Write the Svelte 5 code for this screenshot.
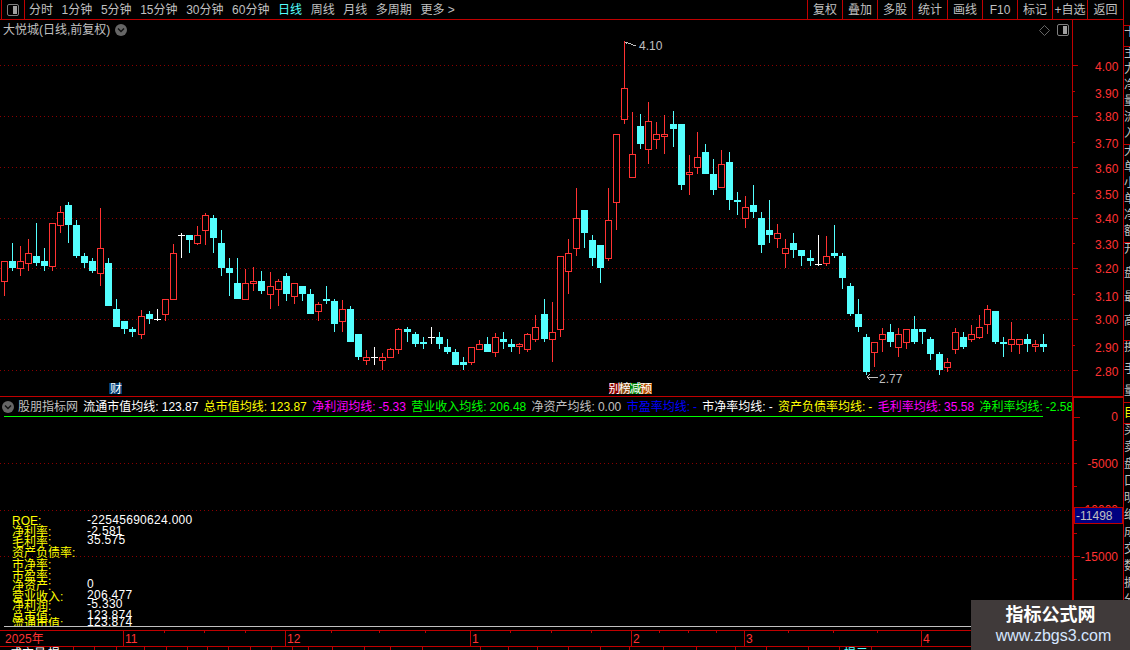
<script>
  const tools = ['分时', '1分钟', '5分钟', '15分钟', '30分钟', '60分钟', '日线', '周线', '月线', '多周期'];
  const actions = ['复权', '叠加', '多股', '统计', '画线', 'F10', '标记', '+自选', '返回'];

  const segments = [
    { ox: 0, oy: 190, rows: [
      ['r',13,214,214,275,318],['c',37,159,213,234,243],['r',61,168,214,236,258],['r',85,147,190,221,243],
      ['c',109,99,198,219,228],['c',133,174,213,228,243],['r',157,99,99,231,243],['r',181,48,67,107,129],
      ['c',205,37,45,105,159],['c',229,90,105,198,204],['c',253,189,198,219,234],['c',277,204,213,243,249],
      ['r',301,54,175,251,288],['c',325,204,219,348,348],['c',349,327,357,411,411],['c',373,393,393,417,432],
      ['c',397,411,417,426,441],['r',424,360,379,434,447],['c',448,363,372,387,402],['w',472,357,388,388,393],
      ['r',496,328,328,374,393],['r',520,162,190,329,329],['w',544,129,134,134,204],['c',568,135,135,150,189],
      ['r',592,108,136,161,165],['r',616,69,76,122,165],['c',640,75,84,144,189],['c',664,120,159,234,258],
      ['c',688,204,234,249,318],['c',712,204,279,327,327],['r',736,237,280,329,329],['r',760,231,274,281,303],
      ['c',784,243,273,303,312],['r',811,246,289,314,357],['r',835,267,274,299,348]
    ]},
    { ox: 280, oy: 190, rows: [
      ['c',19,249,258,312,333],['r',43,280,280,320,342],['c',67,288,288,312,333],['c',91,297,312,372,372],
      ['r',115,336,343,365,393],['c',139,288,327,333,342],['c',163,327,333,402,426],['r',187,330,358,395,426],
      ['c',211,348,357,456,456],['c',235,432,432,501,510],['r',259,480,502,512,525],['w',283,471,502,502,525],
      ['r',307,489,502,512,540],['r',331,474,478,503,503],['r',355,414,418,479,492],['c',382,411,417,426,456],
      ['c',406,426,432,462,471],['c',430,441,456,462,477],['w',454,411,441,441,462],['c',478,426,441,462,477],
      ['c',502,447,471,486,492],['c',526,477,486,525,525],['c',550,501,516,525,540],['r',574,472,472,518,525],
      ['r',598,450,462,479,479],['c',622,441,462,486,486],['r',646,429,442,488,501],['c',670,426,447,456,477],
      ['c',694,447,462,471,486],['r',718,459,463,472,492],['r',742,429,433,479,486],['r',766,375,412,449,456]
    ]},
    { ox: 540, oy: 90, rows: [
      ['c',13,627,672,747,756],['r',37,636,727,749,816],['r',61,499,499,719,741],['r',85,447,490,545,612],
      ['r',109,294,385,476,498],['c',133,360,360,429,474],['c',157,435,450,504,528],['c',181,465,465,534,579],
      ['r',205,294,391,506,513],['r',229,133,133,338,420],['r',253,-147,-6,89,102],['r',277,66,193,263,263],
      ['c',301,72,108,162,177],['r',325,36,94,179,222],['r',349,96,133,149,177],['r',373,75,133,140,192],
      ['c',400,63,102,117,171],['c',424,102,102,285,300],['r',448,195,247,254,315],['r',472,126,202,233,252],
      ['c',496,162,186,252,252],['c',520,207,252,300,315],['r',544,180,223,293,293],['c',568,186,216,330,360],
      ['c',592,306,330,336,375],['r',616,318,352,386,414],['c',640,285,345,366,384],['c',664,366,384,465,489],
      ['c',688,330,420,435,459],['r',712,402,430,446,474],['r',736,447,475,491,534],['c',760,429,459,480,504],
      ['c',784,480,480,498,528],['c',811,480,504,513,528],['w',835,435,521,521,528]
    ]},
    { ox: 800, oy: 190, rows: [
      ['r',79,138,199,221,228],['c',103,105,189,198,204],['c',127,189,198,264,297],['c',151,279,288,372,378],
      ['c',175,327,372,411,426],['c',199,432,441,546,555],['r',223,457,457,488,531],['r',247,414,433,449,486],
      ['c',271,402,426,456,471],['r',295,414,433,473,501],['r',319,418,418,458,477],['c',343,378,417,456,462],
      ['c',367,417,417,426,462],['c',391,441,447,492,510],['c',418,486,492,540,555],['r',442,504,517,533,546],
      ['r',466,414,427,479,492],['c',490,426,441,471,477],['r',514,405,433,449,456],['r',538,375,412,443,447],
      ['r',562,345,358,404,432],['c',586,363,363,456,462],['c',610,441,456,462,501],['r',634,396,448,464,486],
      ['r',658,448,448,464,492],['c',682,432,447,462,486],['r',706,450,463,472,486],['c',730,432,462,471,486]
    ]}
  ];

  const candles = segments.flatMap(({ ox, oy, rows }) =>
    rows.map(([kind, zx, high, top, bottom, low]) => ({
      kind,
      x: Math.floor(ox + zx / 3),
      high: Math.round(oy + high / 3),
      top: Math.round(oy + top / 3),
      bottom: Math.round(oy + bottom / 3),
      low: Math.round(oy + low / 3)
    }))
  );

  const grid = [65, 116, 167, 218, 268, 319, 370];
  const prices = [
    ['4.00', 65, 1, 66], ['3.90', 91, 0, 93], ['3.80', 116, 1, 116], ['3.70', 142, 0, 143], ['3.60', 167, 1, 168], ['3.50', 193, 0, 194],
    ['3.40', 218, 1, 218], ['3.30', 243, 0, 244], ['3.20', 268, 1, 268], ['3.10', 294, 0, 296], ['3.00', 319, 1, 319], ['2.90', 345, 0, 347], ['2.80', 370, 1, 371]
  ];

  const legend = [
    ['流通市值均线:', '123.87', 'white'], ['总市值均线:', '123.87', 'yellow'], ['净利润均线:', '-5.33', 'magenta'],
    ['营业收入均线:', '206.48', 'green'], ['净资产均线:', '0.00', 'grey'], ['市盈率均线:', '-', 'blue'],
    ['市净率均线:', '-', 'white'], ['资产负债率均线:', '-', 'yellow'], ['毛利率均线:', '35.58', 'magenta'], ['净利率均线:', '-2.58', 'green']
  ];

  const stats = [
    ['ROE:', 520, '-22545690624.000', 520], ['净利率:', 531, '-2.581', 531], ['毛利率:', 541, '35.575', 540],
    ['资产负债率:', 552, '', 0], ['市净率:', 564, '', 0], ['市盈率:', 575, '', 0], ['净资产:', 585, '0', 584],
    ['营业收入:', 596, '206.477', 595], ['净利润:', 605, '-5.330', 604], ['总市值:', 616, '123.874', 615], ['流通市值:', 623, '123.874', 622]
  ];

  const lowerGrid = [463, 510, 556];
  const lowerTicks = [440, 463, 486, 510, 533, 556, 579, 602];
  const months = [['11', 123], ['12', 285], ['1', 470], ['2', 631], ['3', 744], ['4', 921]];
  const topTicks = [164, 204, 245, 331, 379, 425, 510, 551, 591, 659, 688, 716, 788, 833, 877];
  const bottomTicks = [43, 73, 94, 116, 144, 166, 187, 207, 228, 250, 271, 292, 308, 332, 364, 390, 422, 480, 508, 537, 568, 600, 629, 663, 696, 735, 766, 808, 839, 871];
  const stamps = [['别', 'dark'], ['榜', 'brown'], ['减', 'leaf'], ['预', 'orange']];
  const stripCells = [
    ['十', 'c-head'], ['主力净量流入', 'c-a'], ['大单小单净额', 'c-a'], ['开盘最高', 'c-b'], ['换手量', 'c-c'],
    ['目', 'c-mark'], ['买卖盘口明细成交数据分析', 'c-d']
  ];
</script>

<div class="screen">
  <header class="toolbar">
    <div class="toggle-cell">
      <span class="toggle"><i></i></span>
    </div>
    <nav class="tools">
      {#each tools as tool}
        <span class:active={tool === '日线'}>{tool}</span>
      {/each}
      <span>更多 &gt;</span>
    </nav>
    <div class="actions">
      {#each actions as action}
        <span>{action}</span>
      {/each}
    </div>
  </header>

  <div class="workspace">
    <main class="charts">
      <section class="price-panel">
        <div class="plot">
          <div class="title-row">
            <span class="title">大悦城(日线,前复权)</span>
            <svg class="chev" width="12" height="12" viewBox="0 0 12 12">
              <circle cx="6" cy="6" r="6" fill="#666" />
              <path d="M3 4.6 6 7.6 9 4.6" fill="none" stroke="#111" stroke-width="1.4" />
            </svg>
            <span class="spacer"></span>
            <svg width="11" height="11" viewBox="0 0 11 11">
              <path d="M5.5.5 10.5 5.5 5.5 10.5.5 5.5Z" fill="none" stroke="#666" />
            </svg>
            <span class="toggle small"><i></i></span>
          </div>
          <svg class="kline" width="1072" height="356" viewBox="0 40 1072 356" shape-rendering="crispEdges">
            {#each grid as y}
              <line class="dot" x1="0" x2="1072" y1={y + 0.5} y2={y + 0.5} />
            {/each}
            {#each candles as c}
              {#if c.kind === 'c'}
                <rect class="cyan" x={c.x} y={c.high} width="1" height={c.low - c.high} />
                <rect class="cyan" x={c.x - 3} y={c.top} width="7" height={Math.max(c.bottom - c.top, 2)} />
              {:else if c.kind === 'r'}
                <rect class="red" x={c.x} y={c.high} width="1" height={c.top - c.high} />
                <rect class="red" x={c.x} y={c.bottom} width="1" height={c.low - c.bottom} />
                <rect class="hollow" x={c.x - 2.5} y={c.top + 0.5} width="6" height={Math.max(c.bottom - c.top - 1, 1)} />
              {:else}
                <rect class="white" x={c.x} y={c.high} width="1" height={c.low - c.high} />
                <rect class="white" x={c.x - 3} y={c.top} width="7" height="1" />
              {/if}
            {/each}
            <path class="note" d="M625.5 42H628M625.5 42 627 44M628 43 636 46" />
            <text class="mark" x="639" y="50">4.10</text>
            <path class="note" d="M867 377H878M867 377 870 374M867 377 870 380" />
            <text class="mark" x="879" y="383">2.77</text>
            <rect class="st-blue" x="109" y="383" width="13" height="11" />
            <text class="stamp" x="110" y="393">财</text>
            <g>
              {#each stamps as [glyph, tone], i}
                <rect class={'st-' + tone} x={609 + i * 10.5} y="383" width="11" height="11" />
                <text class="stamp" x={608.5 + i * 10.5} y="393">{glyph}</text>
              {/each}
            </g>
          </svg>
        </div>
        <svg class="axis" width="50" height="376" viewBox="1073 20 50 376" shape-rendering="crispEdges">
          {#each prices as [label, y, major, ly]}
            <line class="axis-line" x1="1073" x2={major ? 1078 : 1075} y1={y + 0.5} y2={y + 0.5} />
            <text class="axis-text" x="1095" y={ly + 4.5}>{label}</text>
          {/each}
        </svg>
      </section>

      <section class="lower-panel">
        <div class="plot">
          <div class="legend">
            <div class="source">
              <svg width="12" height="12" viewBox="0 0 12 12">
                <circle cx="6" cy="6" r="6" fill="#666" />
                <path d="M3 4.6 6 7.6 9 4.6" fill="none" stroke="#111" stroke-width="1.4" />
              </svg>
              <span>股朋指标网</span>
            </div>
            {#each legend as [name, value, tone]}
              <span class={'item ' + tone}>{name}<b>{value}</b></span>
            {/each}
          </div>
          <svg class="indicator" width="1072" height="210" viewBox="0 416 1072 210" shape-rendering="crispEdges">
            <line class="green-line" x1="4" x2="1043" y1="416.5" y2="416.5" />
            {#each lowerGrid as y}
              <line class="dot" x1="0" x2="1072" y1={y + 0.5} y2={y + 0.5} />
            {/each}
            {#each stats as [label, y, value, vy]}
              <text class="stat-label" x="12" y={y + 5}>{label}</text>
              {#if value}
                <text class="stat-value" x="87" y={vy + 4}>{value}</text>
              {/if}
            {/each}
          </svg>
        </div>
        <div class="lower-axis">
          <svg width="50" height="229" viewBox="1074 397 50 229" shape-rendering="crispEdges">
            <line class="axis-line" x1="1074" x2="1080" y1="417.5" y2="417.5" />
            {#each lowerTicks as y}
              <line class="axis-line" x1="1074" x2="1077" y1={y + 0.5} y2={y + 0.5} />
            {/each}
            <text class="axis-text end" x="1118" y="421">0</text>
            <text class="axis-text end" x="1118" y="468">-5000</text>
            <text class="axis-text end" x="1118" y="514">-10000</text>
            <text class="axis-text end" x="1118" y="561">-15000</text>
            <line class="axis-line" x1="1074" x2="1080" y1="556.5" y2="556.5" />
            <rect class="price-tag" x="1074.5" y="507.5" width="48" height="16" />
            <text class="tag-text" x="1076" y="520">-11498</text>
          </svg>
        </div>
      </section>

      <footer class="timeline">
        <svg width="1124" height="24" viewBox="0 626 1124 24" shape-rendering="crispEdges">
          <line class="grey-line" x1="4" x2="1124" y1="626.5" y2="626.5" />
          <line class="axis-line" x1="0" x2="1124" y1="630.5" y2="630.5" />
          <line class="axis-line" x1="0" x2="1124" y1="646.5" y2="646.5" />
          {#each topTicks as x}
            <line class="axis-line" x1={x + 0.5} x2={x + 0.5} y1="631" y2="633" />
          {/each}
          {#each bottomTicks as x}
            <line class="axis-line" x1={x + 0.5} x2={x + 0.5} y1="647" y2="650" />
          {/each}
          <text class="axis-text" x="5" y="643">2025年</text>
          {#each months as [label, x]}
            <line class="axis-line" x1={x + 0.5} x2={x + 0.5} y1="631" y2="646" />
            <text class="axis-text" x={x + 2} y="643">{label}</text>
          {/each}
          <text class="cut" x="10" y="658">成交量</text>
          <text class="cut" x="48" y="658">提</text>
          <text class="cut cyan-text" x="844" y="658">提示</text>
        </svg>
      </footer>
    </main>

    <aside class="strip">
      {#each stripCells as [text, cls]}
        <div class={'cell ' + cls}>
          {#each Array.from(text) as ch}
            <span>{ch}</span>
          {/each}
        </div>
      {/each}
    </aside>
  </div>

  <div class="watermark">
    <strong>指标公式网</strong>
    <span>www.zbgs3.com</span>
  </div>
</div>

<style>
  :global(body) {
    margin: 0;
    background: #000;
  }

  .screen {
    position: relative;
    width: 1130px;
    height: 650px;
    overflow: hidden;
    background: #000;
    color: #c0c0c0;
    font: 12px/1 "Liberation Sans", "Noto Sans CJK SC", sans-serif;
  }

  svg {
    display: block;
  }

  .toolbar {
    display: flex;
    width: 1124px;
    height: 19px;
    box-sizing: content-box;
    border-bottom: 1px solid #c00000;
  }

  .toggle-cell {
    display: flex;
    align-items: center;
    justify-content: center;
    width: 22px;
    margin-left: 1px;
    border-left: 1px solid #c00000;
    border-right: 1px solid #c00000;
  }

  .toggle {
    display: flex;
    justify-content: flex-end;
    box-sizing: border-box;
    width: 12px;
    height: 12px;
    padding: 1px;
    border: 1px solid #808080;
    border-radius: 2px;
  }

  .toggle i {
    width: 4px;
    background: #a0a0a0;
  }

  .tools {
    display: flex;
    align-items: center;
    gap: 8.6px;
    margin-left: 4px;
    white-space: nowrap;
  }

  .tools .active {
    color: #54ffff;
  }

  .actions {
    display: flex;
    margin-left: auto;
  }

  .actions span {
    display: flex;
    align-items: center;
    justify-content: center;
    box-sizing: border-box;
    width: 35px;
    border-left: 1px solid #c00000;
    white-space: nowrap;
  }

  .actions span:last-child {
    width: 37px;
    border-right: 1px solid #c00000;
  }

  .workspace {
    display: flex;
    height: 630px;
  }

  .charts {
    width: 1124px;
  }

  .price-panel {
    display: flex;
    height: 376px;
    border-bottom: 1px solid #c00000;
  }

  .plot {
    width: 1072px;
  }

  .title-row {
    display: flex;
    align-items: center;
    height: 20px;
    padding-left: 3px;
    padding-right: 3px;
    gap: 5px;
    box-sizing: border-box;
  }

  .spacer {
    flex: 1;
  }

  .toggle.small {
    margin-left: 2px;
  }

  .axis {
    box-sizing: content-box;
    border-left: 1px solid #c00000;
    border-right: 1px solid #c00000;
  }

  .lower-panel {
    display: flex;
    height: 229px;
  }

  .legend {
    display: flex;
    align-items: center;
    gap: 5.35px;
    height: 19px;
    white-space: nowrap;
    overflow: hidden;
  }

  .source {
    display: flex;
    align-items: center;
    gap: 4px;
    margin-left: 2px;
  }

  .item b {
    margin-left: 3px;
    font-weight: 400;
  }

  .white { color: #fff; }
  .yellow { color: #ffff00; }
  .magenta { color: #ff00ff; }
  .green { color: #00ff00; }
  .grey { color: #c0c0c0; }
  .blue { color: #0000ff; }

  .lower-axis {
    box-sizing: border-box;
    width: 52px;
    border-left: 2px solid #c00000;
    border-top: 2px solid #c00000;
    border-right: 1px solid #c00000;
    margin-top: -1px;
    height: 230px;
    overflow: hidden;
  }

  .lower-axis svg {
    margin-top: -1px;
  }

  .dot {
    stroke: #8a0000;
    stroke-dasharray: 1 3;
  }

  .cyan { fill: #54ffff; }
  .red { fill: #ff3232; }
  .white { fill: #fff; }

  .hollow {
    fill: #000;
    stroke: #ff3232;
  }

  .note {
    fill: none;
    stroke: #c0c0c0;
  }

  .mark {
    fill: #c0c0c0;
    font-size: 12px;
  }

  .stamp {
    fill: #fff;
    font-size: 12px;
  }

  .st-blue { fill: #003c74; }
  .st-dark { fill: #8b0000; }
  .st-brown { fill: #8b4a10; }
  .st-leaf { fill: #008000; }
  .st-orange { fill: #b85000; }

  .axis-line {
    stroke: #c00000;
  }

  .axis-text {
    fill: #ff3232;
    font-size: 12px;
  }

  .axis-text.end {
    text-anchor: end;
  }

  .price-tag {
    fill: #000080;
    stroke: #c00000;
  }

  .tag-text {
    fill: #c0c0c0;
    font-size: 12px;
  }

  .green-line {
    stroke: #00ff00;
  }

  .stat-label {
    fill: #ffff00;
    font-size: 12px;
  }

  .stat-value {
    fill: #fff;
    font-size: 12px;
    letter-spacing: 0.3px;
  }

  .grey-line {
    stroke: #c0c0c0;
  }

  .cut {
    fill: #fff;
    font-size: 12px;
  }

  .cut.cyan-text {
    fill: #54ffff;
  }

  .strip {
    box-sizing: border-box;
    width: 6px;
    padding-top: 5px;
    overflow: hidden;
    color: #c0c0c0;
  }

  .cell {
    display: flex;
    flex-direction: column;
    width: 14px;
    overflow: hidden;
    border-top: 1px solid #c00000;
    margin-left: -1px;
    padding-left: 1px;
  }

  .cell span {
    flex: none;
  }

  .c-head { height: 20px; }
  .c-a { height: 97px; gap: 4px; }
  .c-b { height: 97px; gap: 12px; }
  .c-c { height: 61px; gap: 10px; }
  .c-mark { height: 21px; color: #ffff00; padding-top: 4px; box-sizing: border-box; }
  .c-d { height: 190px; gap: 5px; }

  .watermark {
    position: absolute;
    left: 971px;
    top: 600px;
    display: flex;
    flex-direction: column;
    align-items: center;
    box-sizing: border-box;
    width: 159px;
    height: 50px;
    padding: 6px 0 0 6px;
    gap: 3px;
    background: #403a3a;
    color: #fff;
  }

  .watermark strong {
    font-size: 18px;
    line-height: 18px;
    margin-right: 6px;
  }

  .watermark span {
    font-size: 16px;
    line-height: 18px;
    color: #d5e6ff;
  }
</style>
